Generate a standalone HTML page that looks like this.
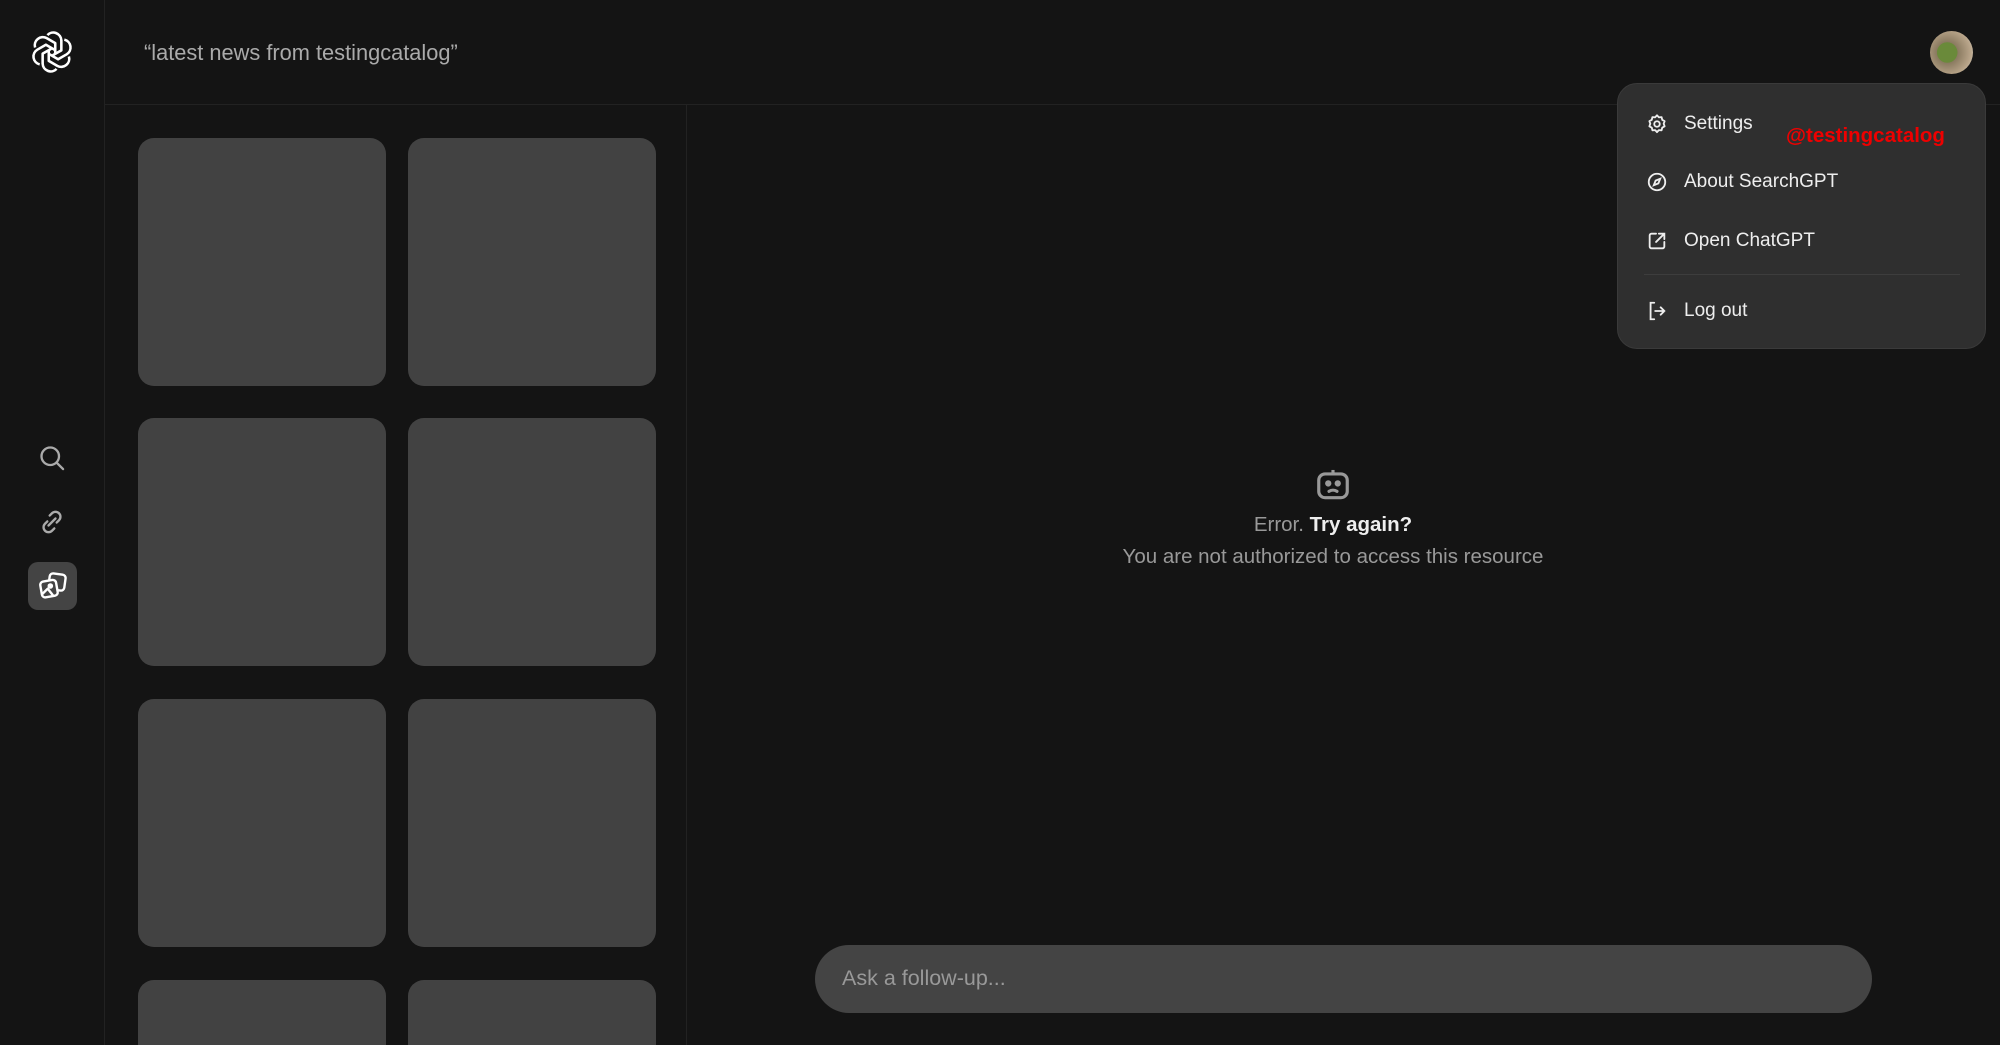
<!DOCTYPE html>
<html style="width:2000px;height:1045px;overflow:hidden"><head><meta charset="utf-8"><style>
*{margin:0;padding:0;box-sizing:border-box}
body{width:2000px;height:1045px;background:#141414;font-family:"Liberation Sans",Arial,sans-serif;position:relative;overflow:hidden}
#wrap{position:absolute;left:0;top:0;width:2000px;height:1045px;overflow:hidden}
.abs{position:absolute}
.side{left:0;top:0;width:105px;height:1045px;border-right:1px solid #222}
.head{left:105px;top:0;width:1895px;height:105px;border-bottom:1px solid #222}
.panel{left:105px;top:105px;width:582px;height:940px;border-right:1px solid #222}
.tile{position:absolute;width:248px;height:248px;background:#424242;border-radius:16px}
.menu{left:1617px;top:83px;width:369px;height:266px;background:#2f2f2f;border:1px solid #3a3a3a;border-radius:20px}
.item{position:absolute;left:66px;color:#eee;font-size:19px;line-height:24px}
.ico{position:absolute;left:28px}
</style></head><body><div id="wrap">
<div class="abs side"></div>
<div class="abs head"></div>
<div class="abs panel"></div>
<svg class="abs" style="left:30px;top:30px" width="44" height="44" viewBox="0 0 24 24" fill="none" stroke="#fff" stroke-width="1.4" stroke-linejoin="round">
<g transform="translate(12 12)">
<path id="p" d="M-2.5 -9.2 a4.4 4.4 0 0 1 7.6 2.9 v5.4 l-4.7 2.7"/>
<use href="#p" transform="rotate(60)"/><use href="#p" transform="rotate(120)"/><use href="#p" transform="rotate(180)"/><use href="#p" transform="rotate(240)"/><use href="#p" transform="rotate(300)"/>
</g></svg>
<div class="abs" style="left:144px;top:40px;color:#aaa;font-size:21.8px">“latest news from testingcatalog”</div>
<svg class="abs" style="left:38px;top:444px" width="28" height="28" viewBox="0 0 24 24" fill="none" stroke="#aaa" stroke-width="2" stroke-linecap="round"><circle cx="10.5" cy="10.5" r="7.5"/><path d="M16 16l5.5 5.5"/></svg>
<svg class="abs" style="left:38px;top:508px" width="28" height="28" viewBox="0 0 24 24" fill="none" stroke="#aaa" stroke-width="2" stroke-linecap="round"><path d="M10 6.5l2-2a4.2 4.2 0 0 1 6 6l-2 2M14 17.5l-2 2a4.2 4.2 0 0 1-6-6l2-2M9 15l6-6"/></svg>
<div class="abs" style="left:28px;top:562px;width:49px;height:48px;background:#444;border-radius:10px"></div>
<svg class="abs" style="left:37px;top:570px" width="32" height="32" viewBox="0 0 24 24" fill="none" stroke="#fff" stroke-width="1.8" stroke-linejoin="round"><rect x="9" y="3" width="12" height="12" rx="2.5" transform="rotate(8 15 9)"/><rect x="3" y="8" width="12" height="12" rx="2.5" transform="rotate(-10 9 14)" fill="#444"/><circle cx="10" cy="12" r="1.2" fill="#fff"/><path d="M4 18l4-4 4 5"/></svg>
<div class="tile" style="left:138px;top:138px"></div><div class="tile" style="left:408px;top:138px"></div>
<div class="tile" style="left:138px;top:418px"></div><div class="tile" style="left:408px;top:418px"></div>
<div class="tile" style="left:138px;top:699px"></div><div class="tile" style="left:408px;top:699px"></div>
<div class="tile" style="left:138px;top:980px;height:65px;border-radius:16px 16px 0 0"></div><div class="tile" style="left:408px;top:980px;height:65px;border-radius:16px 16px 0 0"></div>
<svg class="abs" style="left:1314px;top:466px" width="38" height="38" viewBox="0 0 24 24" fill="none" stroke="#999" stroke-width="2"><rect x="3" y="5" width="18" height="15" rx="4"/><path d="M12 5V2.5"/><circle cx="9" cy="11" r="1" fill="#999"/><circle cx="15" cy="11" r="1" fill="#999"/><path d="M9.5 16c1.5-1 3.5-1 5 0" stroke-linecap="round"/></svg>
<div class="abs" style="left:0;width:2666px;top:513px;text-align:center;font-size:20.5px;color:#999"><span>Error. </span><b style="color:#eee">Try again?</b></div>
<div class="abs" style="left:0;width:2666px;top:545px;text-align:center;font-size:20.5px;color:#999">You are not authorized to access this resource</div>
<div class="abs" style="left:815px;top:945px;width:1057px;height:68px;background:#444;border-radius:34px"></div>
<div class="abs" style="left:842px;top:966px;font-size:21.5px;color:#999">Ask a follow-up...</div>
<div class="abs" style="left:1930px;top:31px;width:43px;height:43px;border-radius:50%;background:radial-gradient(circle at 40% 50%,#6a8a3a 0 30%,#8a7a60 31%,#b9a58a 70%,#ddd 100%)"></div>
<div class="abs menu">
<svg class="ico" style="top:29px" width="22" height="22" viewBox="0 0 24 24" fill="none" stroke="#eee" stroke-width="2" stroke-linejoin="round"><path d="M12 2.5l2 2.2 3-.2.7 2.9 2.6 1.5-1 2.8 1 2.8-2.6 1.5-.7 2.9-3-.2-2 2.2-2-2.2-3 .2-.7-2.9L3.7 14.5l1-2.8-1-2.8 2.6-1.5.7-2.9 3 .2z"/><circle cx="12" cy="12" r="3"/></svg>
<div class="item" style="top:28px">Settings</div>
<svg class="ico" style="top:87px" width="22" height="22" viewBox="0 0 24 24" fill="none" stroke="#eee" stroke-width="2"><circle cx="12" cy="12" r="9"/><path d="M15.5 8.5l-2 5-5 2 2-5z"/></svg>
<div class="item" style="top:86px">About SearchGPT</div>
<svg class="ico" style="top:146px" width="22" height="22" viewBox="0 0 24 24" fill="none" stroke="#eee" stroke-width="2" stroke-linecap="round"><path d="M11 4H6a2 2 0 0 0-2 2v12a2 2 0 0 0 2 2h12a2 2 0 0 0 2-2v-5M14 4h6v6M20 4l-9 9"/></svg>
<div class="item" style="top:145px">Open ChatGPT</div>
<div style="position:absolute;left:26px;top:190px;width:316px;height:1px;background:#3d3d3d"></div>
<svg class="ico" style="top:216px" width="22" height="22" viewBox="0 0 24 24" fill="none" stroke="#eee" stroke-width="2" stroke-linecap="round"><path d="M9 3H5v18h4M10 12h10M16 8l4 4-4 4"/></svg>
<div class="item" style="top:215px">Log out</div>
</div>
<div class="abs" style="left:1786px;top:124px;color:#e00;font-weight:bold;font-size:20.5px">@testingcatalog</div>
</div></body></html>
